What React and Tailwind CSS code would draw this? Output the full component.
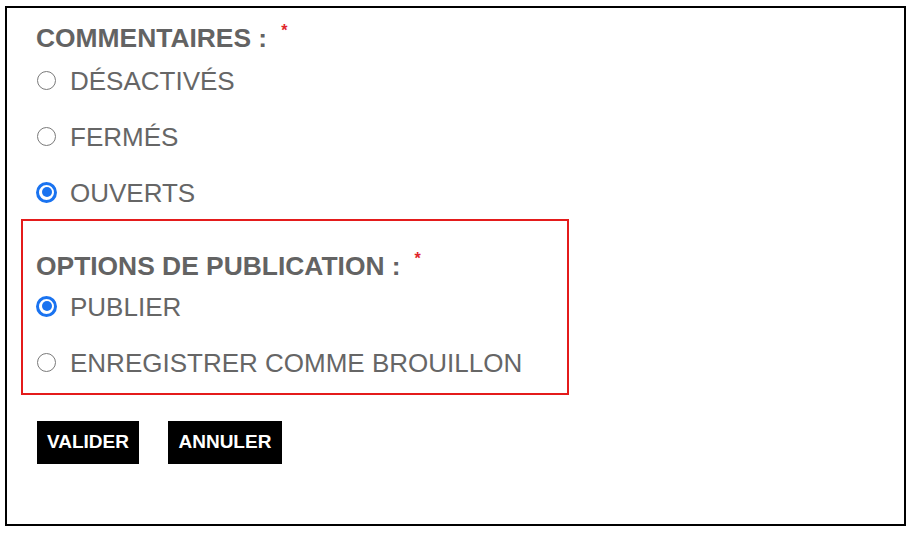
import React from "react";

const font = { fontFamily: '"Liberation Sans", Arial, sans-serif' };

function Radio({ checked }) {
  if (checked) {
    return (
      <span className="flex h-[21px] w-[21px] shrink-0 items-center justify-center rounded-full border-[3px] border-[#1a73f0] bg-white">
        <span className="h-[10px] w-[10px] rounded-full bg-[#1a73f0]" />
      </span>
    );
  }
  return <span className="h-[19px] w-[19px] shrink-0 rounded-full border-[1.5px] border-[#7a7a7a] bg-white" />;
}

function Option({ label, checked }) {
  return (
    <label className="flex h-[30px] items-center">
      <span className="mb-[2px] flex w-[21px] justify-center">
        <Radio checked={checked} />
      </span>
      <span className="ml-[13px] text-[26px] leading-[30px] text-[#666666]">{label}</span>
    </label>
  );
}

function Heading({ children }) {
  return (
    <div className="flex h-[30px] items-start">
      <span className="text-[26.4px] font-bold leading-[30px] text-[#636363]">{children}</span>
      <span className="ml-[14px] text-[16px] font-bold leading-none text-[#e0262b]">*</span>
    </div>
  );
}

export default function App() {
  return (
    <div className="min-h-[536px] w-[916px] bg-white pl-[5px] pt-[6px]" style={font}>
      <div className="flex h-[520px] w-[901px] flex-col border-2 border-black">
        <div className="pl-[29px] pt-[15px]">
          <Heading>COMMENTAIRES :</Heading>
          <div className="mt-[13px] flex flex-col gap-[26px]">
            <Option label="DÉSACTIVÉS" />
            <Option label="FERMÉS" />
            <Option label="OUVERTS" checked />
          </div>
        </div>
        <div className="ml-[14px] mt-[11px] w-[548px] border-2 border-[#e41b1b] pb-[15px] pl-[13px] pt-[30px]">
          <Heading>OPTIONS DE PUBLICATION :</Heading>
          <div className="mt-[11px] flex flex-col gap-[26px]">
            <Option label="PUBLIER" checked />
            <Option label="ENREGISTRER COMME BROUILLON" />
          </div>
        </div>
        <div className="mt-[26px] flex gap-[29px] pl-[30px]">
          <button className="h-[43px] bg-black px-[10px] text-[19px] font-bold text-white">VALIDER</button>
          <button className="h-[43px] bg-black px-[10.5px] text-[19px] font-bold text-white">ANNULER</button>
        </div>
      </div>
    </div>
  );
}
